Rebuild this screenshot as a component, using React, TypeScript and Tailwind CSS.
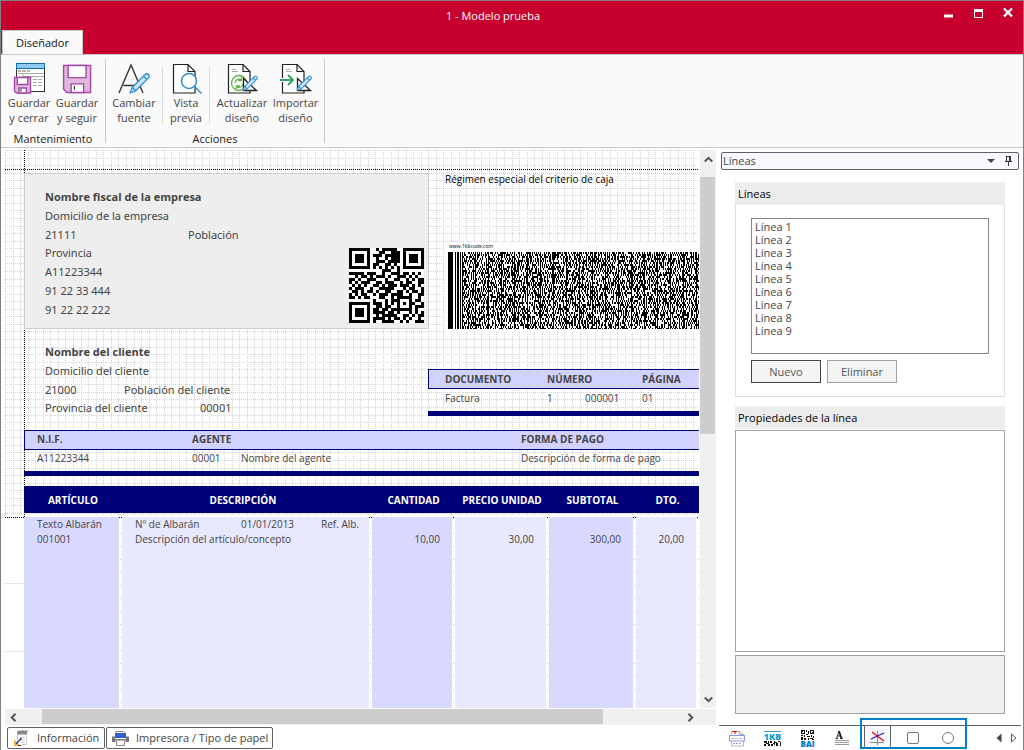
import type { ReactNode } from "react";

const QR_ROWS = [
  "1111111001011111001111111",
  "1000001000110011101000001",
  "1011101011101111101011101",
  "1011101001001011101011101",
  "1011101001110111101011101",
  "1000001011001101001000001",
  "1111111010101010101111111",
  "0000000000011100100000000",
  "1111101110010011101101010",
  "0010110101110100111010100",
  "1101001110001001100101011",
  "1010111001101110010110011",
  "0101010011010111011101010",
  "1011100100111110001011001",
  "0110101101001100110101101",
  "1010110010111011110010011",
  "1101011000110010111110010",
  "0000000010001011100010110",
  "1111111011101010101011001",
  "1000001001101100100010111",
  "1011101011011011111110100",
  "1011101011110110100010101",
  "1011101001011111001101011",
  "1000001011110101101010010",
  "1111111010011110010100111",
];

const qrPath = QR_ROWS.map((row, y) =>
  row
    .split("")
    .map((c, x) => (c === "1" ? `M${x} ${y}h1v1h-1z` : ""))
    .join("")
).join("");

function buildBarcode(): string {
  let seed = 20137;
  const rand = () => {
    seed = (seed * 48271) % 2147483647;
    return seed / 2147483647;
  };
  let d = "M0 0h5v77h-5zM7 0h1v77h-1zM9 0h2v77h-2zM12 0h1v77h-1z";
  for (let x = 14; x < 560; x += 13) {
    d += `M${x} 0h1v77h-1z`;
    for (let y = 0; y < 77; y += 2) {
      let dark = rand() < 0.5;
      for (let k = 1; k < 13; k += 1) {
        if (rand() < 0.62) dark = !dark;
        if (dark) d += `M${x + k} ${y}h1v${y > 75 ? 1 : 2}h-1z`;
      }
    }
  }
  return d;
}
const barcodePath = buildBarcode();

function buildGrid(): string {
  let d = "";
  for (let i = 0; i < 260; i += 1) {
    const p = Math.round(i * 7.56) + 0.5;
    d += `M${p} 0V366`;
    if (p < 366) d += `M0 ${p}H2000`;
  }
  return d;
}
const gridPath = buildGrid();

function Field({ className, children }: { className: string; children: ReactNode }) {
  return <span className={`absolute leading-[14px] whitespace-nowrap ${className}`}>{children}</span>;
}

function Floppy({ x, y, w, h }: { x: number; y: number; w: number; h: number }) {
  return (
    <g stroke="#a349a4" strokeWidth="1.4">
      <path d={`M${x} ${y}h${w}v${h}h${-w * 0.88}l${-w * 0.12} ${-h * 0.12}z`} fill="#dfb8dc" />
      <path d={`M${x + w * 0.17} ${y}h${w * 0.66}v${h * 0.45}h${-w * 0.66}z`} fill="#fff" />
      <path d={`M${x + w * 0.28} ${y + h}v${-h * 0.32}h${w * 0.46}v${h * 0.32}z`} fill="#fff" />
      <path d={`M${x + w * 0.4} ${y + h * 0.76}v${h * 0.14}`} stroke="#333" strokeWidth="1.2" />
    </g>
  );
}

function SaveCloseIcon() {
  return (
    <svg width="32" height="32" viewBox="0 0 32 32" fill="none" aria-hidden="true">
      <rect x="3.5" y="1.5" width="28" height="28" fill="#fff" stroke="#333" />
      <rect x="3.5" y="1.5" width="28" height="5" fill="#8fc9f2" stroke="#1070b8" />
      <path d="M5 9h3M9 9h4M14 9h3" stroke="#666" />
      <path d="M5 11.5h26M10 14.5h21M10 11.5v4" stroke="#aaa" />
      <path d="M20 17.5h10M20 20.5h10M20 23.5h10" stroke="#aaa" strokeDasharray="4 1" />
      <Floppy x={1.5} y={15.500} w={16} h={15.5} />
    </svg>
  );
}

function SaveIcon() {
  return (
    <svg width="32" height="32" viewBox="0 0 32 32" fill="none" aria-hidden="true">
      <Floppy x={2.6} y={3.5} w={27} h={27} />
    </svg>
  );
}

function Pencil({ d }: { d: string }) {
  return (
    <g transform={d} stroke="#2b8fd6" strokeWidth="1.2" fill="#cfe6f8" strokeLinejoin="round">
      <path d="M0 0l2-5L13.500-16.500a2 2 0 0 1 3 3L5-2z" />
      <path d="M2-5l3 3M12-15l3 3" fill="none" />
    </g>
  );
}

function FontIcon() {
  return (
    <svg width="32" height="32" viewBox="0 0 32 32" fill="none" aria-hidden="true">
      <path d="M1 31L13 3l12 28M5.500 23.500h15" stroke="#333" strokeWidth="1.4" />
      <Pencil d="translate(12 31) scale(1.12)" />
    </svg>
  );
}

function PageShape({ lines }: { lines: boolean }) {
  return (
    <g>
      <path d="M3.500 2.500h14.500l7 7v21.500H3.500z" fill="#fff" stroke="#222" strokeWidth="1.2" />
      <path d="M18 2.500v7h7" stroke="#222" strokeWidth="1.2" />
      {lines && <path d="M7 7.500h4M7 9.500h6" stroke="#aaa" />}
    </g>
  );
}

function PreviewIcon() {
  return (
    <svg width="32" height="32" viewBox="0 0 32 32" fill="none" aria-hidden="true">
      <PageShape lines={false} />
      <circle cx="19" cy="19" r="7.500" fill="#fff" stroke="#2b8fd6" strokeWidth="1.500" />
      <path d="M24.500 24.500l7 7" stroke="#2b8fd6" strokeWidth="1.500" />
    </svg>
  );
}

function DesignMark() {
  return (
    <g>
      <path d="M18.500 16.500v12h13z" fill="#fff" stroke="#222" strokeWidth="1.300" />
      <Pencil d="translate(18 28.500) scale(.84)" />
    </g>
  );
}

function UpdateIcon() {
  return (
    <svg width="34" height="32" viewBox="0 0 34 32" fill="none" aria-hidden="true">
      <PageShape lines />
      <circle cx="14" cy="21" r="7.500" fill="#fff" stroke="#62b246" strokeWidth="1.300" />
      <path d="M10 21a4 4 0 0 1 6.500-3M18 21.500a4 4 0 0 1-6.500 3M16.500 15v3.500H13M11.500 27.500V24H15" stroke="#62b246" strokeWidth="1.300" />
      <DesignMark />
    </svg>
  );
}

function ImportIcon() {
  return (
    <svg width="34" height="32" viewBox="0 0 34 32" fill="none" aria-hidden="true">
      <PageShape lines />
      <path d="M1 18h13M9 13l5 5-5 5" stroke="#fff" strokeWidth="4" />
      <path d="M1 18h13M9 13l5 5-5 5" stroke="#2fa55f" strokeWidth="2" />
      <DesignMark />
    </svg>
  );
}

function RibbonButton({ className, icon, top, bottom }: { className: string; icon: ReactNode; top: string; bottom: string }) {
  return (
    <button type="button" className={`flex flex-col items-center pt-[3px] text-[#444] ${className}`}>
      {icon}
      <span className="mt-px text-center leading-[15px] whitespace-nowrap">
        {top}
        <br />
        {bottom}
      </span>
    </button>
  );
}

function Chevron({ d }: { d: string }) {
  return (
    <svg width="9" height="9" viewBox="0 0 9 9" fill="none" aria-hidden="true">
      <path d={d} stroke="#555" strokeWidth="2" />
    </svg>
  );
}

function Ribbon() {
  return (
    <div className="flex h-[94px] shrink-0 border-t border-b border-[#c8c8c8] bg-[#fafafa] pt-1 pb-1">
      <section className="flex flex-col items-center border-r border-[#c8c8c8] px-1">
        <div className="flex flex-1">
          <RibbonButton className="w-12" icon={<SaveCloseIcon />} top="Guardar" bottom="y cerrar" />
          <RibbonButton className="w-12" icon={<SaveIcon />} top="Guardar" bottom="y seguir" />
        </div>
        <h2 className="leading-[9px] text-[#222]">Mantenimiento</h2>
      </section>
      <section className="flex flex-col items-center border-r border-[#c8c8c8]">
        <div className="flex flex-1 pr-[3px]">
          <RibbonButton className="w-14" icon={<FontIcon />} top="Cambiar" bottom="fuente" />
          <span className="mt-[7px] mb-[10px] w-px bg-[#dcdcdc]" />
          <RibbonButton className="w-[46px]" icon={<PreviewIcon />} top="Vista" bottom="previa" />
          <span className="mt-[7px] mr-1 mb-[10px] w-px bg-[#dcdcdc]" />
          <RibbonButton className="w-14" icon={<UpdateIcon />} top="Actualizar" bottom="diseño" />
          <RibbonButton className="w-[51px]" icon={<ImportIcon />} top="Importar" bottom="diseño" />
        </div>
        <h2 className="leading-[9px] text-[#222]">Acciones</h2>
      </section>
    </div>
  );
}

function ArticleTable() {
  const odd = "border-r-[3px] border-transparent bg-[#d9d9ff] bg-clip-padding";
  const even = "border-r-[3px] border-transparent bg-[#e8e8ff] bg-clip-padding";
  return (
    <table className="absolute top-[336px] left-[19px] w-[675px] table-fixed border-separate border-spacing-0 text-[10px] leading-[15px] text-[#444]">
      <colgroup>
        <col className="w-[98px]" />
        <col className="w-[250px]" />
        <col className="w-[83px]" />
        <col className="w-[94px]" />
        <col className="w-[87px]" />
        <col className="w-[63px]" />
      </colgroup>
      <thead>
        <tr className="h-[27px] bg-[#000078] text-white">
          <th scope="col" className="p-0 pt-px">ARTÍCULO</th>
          <th scope="col" className="p-0 pt-px pr-2">DESCRIPCIÓN</th>
          <th scope="col" className="p-0 pt-px">CANTIDAD</th>
          <th scope="col" className="p-0 pt-px">PRECIO UNIDAD</th>
          <th scope="col" className="p-0 pt-px">SUBTOTAL</th>
          <th scope="col" className="p-0 pt-px">DTO.</th>
        </tr>
      </thead>
      <tbody>
        <tr className="h-1">
          <td colSpan={6} className="p-0" />
        </tr>
        <tr>
          <td className={`p-0 pl-[13px] ${odd}`}>Texto Albarán</td>
          <td className={`p-0 pl-[13px] ${even}`}>
            <div className="flex">
              <span className="w-[106px]">Nº de Albarán</span>
              <span className="w-20">01/01/2013</span>
              <span>Ref. Alb.</span>
            </div>
          </td>
          <td className={`p-0 ${odd}`} />
          <td className={`p-0 ${even}`} />
          <td className={`p-0 ${odd}`} />
          <td className={`p-0 ${even}`} />
        </tr>
        <tr>
          <td className={`p-0 pl-[13px] ${odd}`}>001001</td>
          <td className={`p-0 pl-[13px] ${even}`}>Descripción del artículo/concepto</td>
          <td className={`p-0 pr-3 text-right ${odd}`}>10,00</td>
          <td className={`p-0 pr-3 text-right ${even}`}>30,00</td>
          <td className={`p-0 pr-3 text-right ${odd}`}>300,00</td>
          <td className={`p-0 pr-3 text-right ${even}`}>20,00</td>
        </tr>
        <tr className="h-[400px]">
          <td className={odd} />
          <td className={even} />
          <td className={odd} />
          <td className={even} />
          <td className={odd} />
          <td className={even} />
        </tr>
      </tbody>
    </table>
  );
}

function DesignCanvas() {
  return (
    <main className="relative min-w-0 flex-1 overflow-hidden bg-white text-[#444]">
      <svg className="absolute top-0 left-0" width="2000" height="900" fill="none" shapeRendering="crispEdges" aria-hidden="true">
        <path d={gridPath} stroke="#d4d4d4" strokeDasharray="1 1" />
        <path d="M0 433.500H20M0 501.500H20" stroke="#d4d4d4" strokeDasharray="1 1" />
        <path d="M115.500 383V900M365.500 383V900M448.500 383V900M542.500 383V900M629.500 383V900M693.500 383V900" stroke="#c8c8c8" strokeDasharray="1 12" />
        <path d="M0 19.500H2000M0 367.500H2000M19.500 0V367" stroke="#000" strokeDasharray="1 1" />
      </svg>

      <div className="absolute top-[23px] left-[19px] h-[156px] w-[405px] border border-[#ccc] bg-[#eee]" />
      <div className="font-['Noto_Sans','Open_Sans',sans-serif] text-[11px]">
        <Field className="top-[40px] left-[40px] font-['Open_Sans','Noto_Sans',sans-serif] font-bold">Nombre fiscal de la empresa</Field>
        <Field className="top-[59px] left-[40px]">Domicilio de la empresa</Field>
        <Field className="top-[78px] left-[40px]">21111</Field>
        <Field className="top-[78px] left-[183px]">Población</Field>
        <Field className="top-[96px] left-[40px]">Provincia</Field>
        <Field className="top-[115px] left-[40px]">A11223344</Field>
        <Field className="top-[134px] left-[40px]">91 22 33 444</Field>
        <Field className="top-[153px] left-[40px]">91 22 22 222</Field>
        <Field className="top-[195px] left-[40px] font-['Open_Sans','Noto_Sans',sans-serif] font-bold">Nombre del cliente</Field>
        <Field className="top-[214px] left-[40px]">Domicilio del cliente</Field>
        <Field className="top-[233px] left-[40px]">21000</Field>
        <Field className="top-[233px] left-[119px]">Población del cliente</Field>
        <Field className="top-[251px] left-[40px]">Provincia del cliente</Field>
        <Field className="top-[251px] left-[195px]">00001</Field>
      </div>

      <svg className="absolute top-[98px] left-[344px] bg-white" width="75" height="75" viewBox="0 0 25 25" shapeRendering="crispEdges" role="img" aria-label="QR">
        <path d={qrPath} fill="#000" />
      </svg>

      <Field className="top-[22px] left-[440px] text-[10px] text-black">Régimen especial del criterio de caja</Field>
      <div className="absolute top-[92px] left-[439px] h-[90px] w-[600px] bg-white">
        <span className="absolute top-0 left-[5px] text-[5px] leading-[8px] text-black">www.1kbcode.com</span>
        <svg className="absolute top-[10px] left-[4px]" width="560" height="77" shapeRendering="crispEdges" role="img" aria-label="1KBCode">
          <path d={barcodePath} fill="#000" />
        </svg>
      </div>

      <div className="absolute top-[219px] left-[423px] h-5 w-[600px] border border-[#000078] bg-[#d2d2ff]" />
      <div className="absolute top-[261px] left-[423px] h-[5px] w-[600px] bg-[#000078]" />
      <Field className="top-[222px] left-[440px] text-[10px] font-bold">DOCUMENTO</Field>
      <Field className="top-[222px] left-[542px] text-[10px] font-bold">NÚMERO</Field>
      <Field className="top-[222px] left-[637px] text-[10px] font-bold">PÁGINA</Field>
      <Field className="top-[241px] left-[440px] text-[10px]">Factura</Field>
      <Field className="top-[241px] left-[542px] text-[10px]">1</Field>
      <Field className="top-[241px] left-[580px] text-[10px]">000001</Field>
      <Field className="top-[241px] left-[637px] text-[10px]">01</Field>

      <div className="absolute top-[280px] left-[19px] h-5 w-[1004px] border border-[#000078] bg-[#d2d2ff]" />
      <div className="absolute top-[321px] left-[19px] h-[5px] w-[1004px] bg-[#000078]" />
      <Field className="top-[282px] left-[32px] text-[10px] font-bold">N.I.F.</Field>
      <Field className="top-[282px] left-[187px] text-[10px] font-bold">AGENTE</Field>
      <Field className="top-[282px] left-[516px] text-[10px] font-bold">FORMA DE PAGO</Field>
      <Field className="top-[301px] left-[32px] text-[10px]">A11223344</Field>
      <Field className="top-[301px] left-[187px] text-[10px]">00001</Field>
      <Field className="top-[301px] left-[236px] text-[10px]">Nombre del agente</Field>
      <Field className="top-[301px] left-[516px] text-[10px]">Descripción de forma de pago</Field>

      <ArticleTable />
    </main>
  );
}

function VerticalScroll() {
  return (
    <div className="ml-px flex w-4 shrink-0 flex-col items-center bg-[#f0f0f0]">
      <button type="button" aria-label="Subir" className="flex h-[27px] shrink-0 items-start justify-center pt-[5px]">
        <Chevron d="M.8 6.500L4.500 2.800 8.200 6.500" />
      </button>
      <div className="flex-1 self-stretch">
        <div className="h-[51%] w-[15px] bg-[#cdcdcd]" />
      </div>
      <button type="button" aria-label="Bajar" className="flex h-[27px] shrink-0 items-center justify-center pt-[10px]">
        <Chevron d="M.8 2.500L4.500 6.200 8.200 2.500" />
      </button>
    </div>
  );
}

function HorizontalScroll() {
  return (
    <div className="mt-px flex h-4 shrink-0 items-stretch bg-[#f0f0f0]">
      <button type="button" aria-label="Izquierda" className="flex w-[37px] items-center pl-1">
        <Chevron d="M6.500 .8L2.800 4.500 6.500 8.200" />
      </button>
      <div className="flex-1">
        <div className="h-[15px] w-[88%] bg-[#cdcdcd]" />
      </div>
      <button type="button" aria-label="Derecha" className="flex w-[37px] items-center pl-[7px]">
        <Chevron d="M2.500 .8L6.200 4.500 2.500 8.200" />
      </button>
    </div>
  );
}

function InfoIcon() {
  return (
    <svg width="17" height="17" viewBox="0 0 17 17" fill="none" aria-hidden="true">
      <path d="M4 4V2.500Q4 .5 6.500 .5H16q-2 0-2 3v1H4z" fill="#888" />
      <path d="M4.500 4v6" stroke="#bbb" />
      <path d="M13.500 4v10.500H9" stroke="#ccc" />
      <path d="M7 7.500h5M7 10h5M8 12.500h4" stroke="#ccc" />
      <path d="M1 9v7h7z" fill="#f0b850" />
      <path d="M3 14l5.500-6" stroke="#337" strokeWidth="1.300" />
      <path d="M5 15.500h3" stroke="#335" />
    </svg>
  );
}

function PrinterIcon() {
  return (
    <svg width="17" height="17" viewBox="0 0 17 17" fill="none" aria-hidden="true">
      <path d="M4 4V1.500h7.500L13 3" stroke="#888" />
      <path d="M0 6.500h3V9h11V6.500h3V12h-3.500v-1.500h-10V12H0z" fill="#777" />
      <rect x="3" y="3" width="11" height="5" fill="#2d62c8" />
      <path d="M4.500 11v4.500h8V11" stroke="#888" fill="#fff" />
    </svg>
  );
}

function BottomTabs() {
  const tab = "flex h-[22px] items-center rounded-[2px] border border-[#606068] bg-white text-[#444]";
  return (
    <nav className="mt-[2px] mb-px flex shrink-0 gap-px pl-[2px]">
      <button type="button" className={`${tab} w-[98px] gap-[7px] pl-[5px]`}>
        <InfoIcon />
        Información
      </button>
      <button type="button" className={`${tab} w-[167px] gap-[7px] pl-[5px]`}>
        <PrinterIcon />
        Impresora / Tipo de papel
      </button>
    </nav>
  );
}

const LINES = ["Línea 1", "Línea 2", "Línea 3", "Línea 4", "Línea 5", "Línea 6", "Línea 7", "Línea 8", "Línea 9"];

function ToolTabs() {
  const tab = "flex h-full w-[35px] items-center justify-center";
  return (
    <div className="relative mt-[11px] flex h-[25px] shrink-0 items-stretch border-t border-[#606068] pl-px">
      <button type="button" aria-label="Documento" className={tab}>
        <svg width="17" height="17" viewBox="0 0 17 17" fill="none" aria-hidden="true">
          <path d="M2.500 6V1.500h8l4 3V6M2.500 11v5h12v-5" stroke="#bbb" />
          <path d="M3 1.500h5M6 1v3" stroke="#e02020" strokeWidth="1.200" />
          <path d="M10.500 1.500v3h4" stroke="#aaa" />
          <rect x=".5" y="5.500" width="15" height="5.500" fill="#fff" stroke="#8f8ff8" />
          <path d="M2 8.500h12" stroke="#bbb" strokeDasharray="3 1" />
          <path d="M4 13.500h9" stroke="#99e" strokeDasharray="2 1" />
        </svg>
      </button>
      <button type="button" aria-label="1KB" className={tab}>
        <span className="flex flex-col items-center">
          <span className="border-t border-[#35a8d8] text-[9px] leading-[9px] font-black text-[#1c9cd0]">1KB</span>
          <svg width="17" height="5" viewBox="0 0 17 5" shapeRendering="crispEdges" aria-hidden="true">
            <path d="M0 0h3v2H0zM0 3h2v2H0zM2 2h2v1H2zM4 0h1v5H4zM6 0h2v2H6zM7 3h2v2H7zM5 3h1v2H5zM10 0h1v4h-1zM11 1h2v1h-2zM12 2h2v3h-2zM14 0h2v1h-2zM16 1h1v4h-1zM9 2h2v1H9z" fill="#111" />
          </svg>
        </span>
      </button>
      <button type="button" aria-label="BAI" className={tab}>
        <span className="flex flex-col items-center">
          <svg width="13" height="10" viewBox="0 0 13 10" shapeRendering="crispEdges" aria-hidden="true">
            <path d="M0 0h4v4H0zM9 0h4v4H9zM5 0h1v2H5zM7 1h1v3H7zM5 4h2v1H5zM0 5h2v1H0zM3 5h1v2H3zM0 7h2v3H0zM3 8h2v2H3zM6 6h3v1H6zM7 8h1v2H7zM10 5h1v2h-1zM12 6h1v2h-1zM9 8h3v1H9zM11 9h2v1h-2z" fill="#111" />
            <path d="M1 1h2v2H1zM10 1h2v2h-2z" fill="#fff" />
            <path d="M1 1h1v1H1zM11 2h1v1h-1z" fill="#111" />
          </svg>
          <span className="text-[8px] leading-[7px] font-black text-[#0078c0]">BAI</span>
        </span>
      </button>
      <button type="button" aria-label="Texto" className={tab}>
        <svg width="15" height="16" viewBox="0 0 15 16" fill="none" aria-hidden="true">
          <path d="M.5 8.500H3M5 8.500h3M1.800 8L4 1M2.500 6h3" stroke="#333" />
          <path d="M4 1l2.500 7.500" stroke="#222" strokeWidth="1.800" />
          <path d="M0 10.500h14M0 12.500h14M0 14.500h14" stroke="#999" />
        </svg>
      </button>
      <button type="button" aria-label="Líneas" aria-pressed="true" className={tab}>
        <span className="flex h-[23px] w-[27px] items-center justify-center self-start rounded-b-[3px] border-x border-[#606068] bg-[#f8f8ff]">
          <svg width="16" height="16" viewBox="0 0 16 16" fill="none" aria-hidden="true">
            <path d="M7.500 1v14M0 12.500h14" stroke="#888" />
            <path d="M1 9l13-6" stroke="#1818d8" strokeWidth="1.300" />
            <path d="M2 2l12 9" stroke="#e81818" strokeWidth="1.500" />
          </svg>
        </span>
      </button>
      <button type="button" aria-label="Rectángulos" className={tab}>
        <svg width="12" height="12" viewBox="0 0 12 12" fill="none" aria-hidden="true">
          <rect x=".5" y=".5" width="11" height="11" rx="1.500" stroke="#777" />
        </svg>
      </button>
      <button type="button" aria-label="Círculos" className={tab}>
        <svg width="12" height="12" viewBox="0 0 12 12" fill="none" aria-hidden="true">
          <circle cx="6" cy="6" r="5.500" stroke="#777" />
        </svg>
      </button>
      <span className="flex-1" />
      <button type="button" aria-label="Anterior" className="flex w-[15px] items-center">
        <svg width="6" height="10" viewBox="0 0 6 10" aria-hidden="true">
          <path d="M5.500 .5v9L.5 5z" fill="#444" />
        </svg>
      </button>
      <button type="button" aria-label="Siguiente" className="flex w-[10px] items-center">
        <svg width="6" height="10" viewBox="0 0 6 10" fill="none" aria-hidden="true">
          <path d="M.5 1v8L5 5z" stroke="#555" />
        </svg>
      </button>
      <span className="pointer-events-none absolute -top-[8px] left-[141px] h-[31px] w-[107px] border-2 border-[#0080c8]" />
    </div>
  );
}

function SidePanel() {
  return (
    <aside className="ml-[3px] flex w-[302px] shrink-0 flex-col pt-[2px]">
      <div className="mr-[2px] ml-[2px] flex h-[18px] shrink-0 items-center rounded-[2px] border border-[#606068] bg-[#f8f8ff] pl-px text-[11px] text-[#444]">
        <span className="flex-1">Líneas</span>
        <button type="button" aria-label="Opciones" className="mr-[10px]">
          <svg width="8" height="4" viewBox="0 0 8 4" aria-hidden="true">
            <path d="M0 0h8L4 4z" fill="#444" />
          </svg>
        </button>
        <button type="button" aria-label="Fijar" className="mr-[5px]">
          <svg width="8" height="10" viewBox="0 0 8 10" fill="none" shapeRendering="crispEdges" aria-hidden="true">
            <path d="M1.500 5.500v-5h4v5M4.500 1v5M0 5.500h7M3.500 6v4" stroke="#333" />
          </svg>
        </button>
      </div>

      <div className="mt-3 mr-4 ml-4 flex min-h-0 flex-1 flex-col">
        <section className="shrink-0">
          <h2 className="h-[23px] bg-[#ececec] pl-[3px] text-[11px] leading-[23px] text-black">Líneas</h2>
          <div className="border border-t-0 border-[#dcdcdc] px-[15px] pt-[13px] pb-[13px]">
            <select
              size={9}
              aria-label="Líneas"
              className="block h-[136px] w-full overflow-hidden rounded-none border border-[#828790] bg-white px-[3px] py-0 text-[11px] text-[#444]"
            >
              {LINES.map((line) => (
                <option key={line} className="h-[13px] min-h-0 p-0 leading-[13px]">
                  {line}
                </option>
              ))}
            </select>
            <div className="mt-[6px] flex gap-[6px] text-[#555]">
              <button type="button" className="h-[23px] w-[70px] border border-[#444] bg-[#f4f4f4] pt-px text-[11px]">
                Nuevo
              </button>
              <button type="button" className="h-[23px] w-[70px] border border-[#a0a0a0] bg-[#f4f4f4] pt-px text-[11px]">
                Eliminar
              </button>
            </div>
          </div>
        </section>

        <section className="mt-[9px] flex min-h-0 flex-1 flex-col">
          <h2 className="h-[23px] shrink-0 bg-[#ececec] pl-[3px] text-[11px] leading-[23px] text-black">Propiedades de la línea</h2>
          <div className="mt-px min-h-0 flex-1 border border-[#a0a0a0] bg-white" />
          <div className="mt-[3px] h-[59px] shrink-0 border border-[#a0a0a0] bg-[#f0f0f0]" />
        </section>
      </div>

      <ToolTabs />
    </aside>
  );
}

function TitleBar() {
  return (
    <header className="flex h-[53px] shrink-0 flex-col justify-between bg-[#c8002d]">
      <div className="flex items-start pt-[6px] text-white">
        <h1 className="flex-1 pl-[42px] text-center leading-[18px] font-medium">1 - Modelo prueba</h1>
        <div className="flex w-[80px] justify-between pr-[10px]">
          <button type="button" aria-label="Minimizar">
            <svg width="10" height="11" viewBox="0 0 10 11" aria-hidden="true">
              <path d="M1 7.500h9v3H1z" fill="#fff" />
            </svg>
          </button>
          <button type="button" aria-label="Maximizar">
            <svg width="9" height="11" viewBox="0 0 9 11" fill="none" shapeRendering="crispEdges" aria-hidden="true">
              <path d="M0 2h9v3H0z" fill="#fff" />
              <path d="M.5 2.500h8v8h-8z" stroke="#fff" />
            </svg>
          </button>
          <button type="button" aria-label="Cerrar">
            <svg width="10" height="11" viewBox="0 0 10 11" fill="none" aria-hidden="true">
              <path d="M1 1.500l8 8M9 1.500l-8 8" stroke="#fff" strokeWidth="2.400" />
            </svg>
          </button>
        </div>
      </div>
      <div className="flex pl-px">
        <button type="button" className="-mb-px h-[25px] w-[81px] border border-b-0 border-[#c8c8c8] bg-[#fafafa] pt-px font-medium text-[#111]">
          Diseñador
        </button>
      </div>
    </header>
  );
}

export default function App() {
  return (
    <div className="flex h-screen min-h-[600px] flex-col overflow-hidden border-x border-t border-[#808080] bg-white font-['Open_Sans','Noto_Sans',sans-serif] text-[11px]">
      <TitleBar />
      <Ribbon />
      <div className="flex min-h-0 flex-1 pt-[2px] pl-1">
        <div className="flex min-w-0 flex-1 flex-col">
          <div className="flex min-h-0 flex-1">
            <DesignCanvas />
            <VerticalScroll />
          </div>
          <HorizontalScroll />
          <BottomTabs />
        </div>
        <SidePanel />
        <span className="w-[2px] shrink-0" />
      </div>
    </div>
  );
}
